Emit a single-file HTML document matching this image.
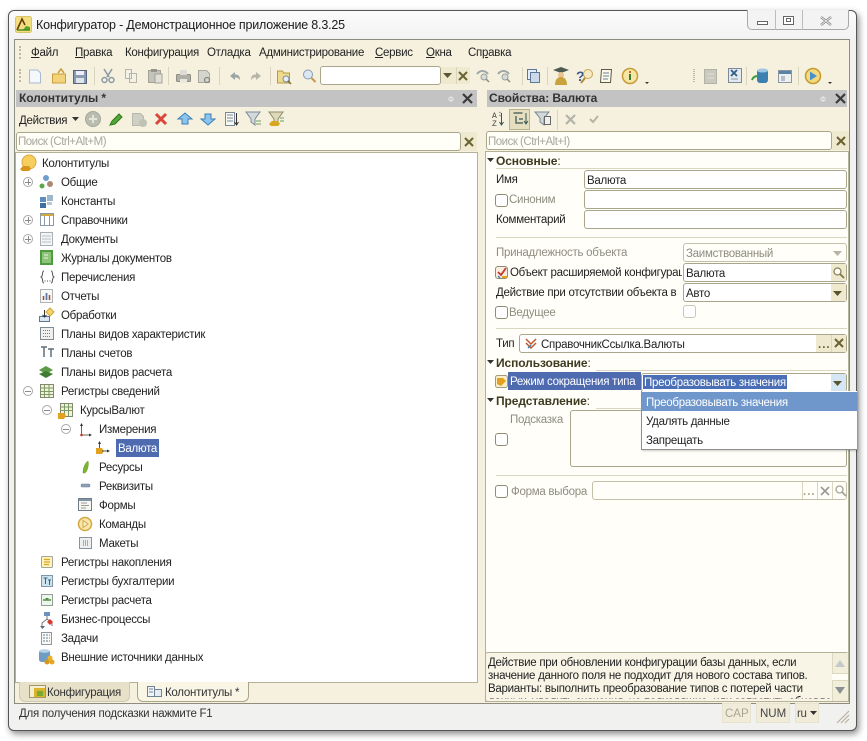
<!DOCTYPE html>
<html><head><meta charset="utf-8">
<style>
html,body{margin:0;padding:0;background:#fff}
body{width:867px;height:741px;position:relative;overflow:hidden;font:11.5px/16px "Liberation Sans",sans-serif;letter-spacing:-.27px;color:#222}
div,span,svg{position:absolute;box-sizing:border-box}
.t{white-space:nowrap;height:16px;line-height:16px;margin-top:1px}
.g{color:#8f8d80}
.b{font-weight:bold;color:#3d3a20;font-size:12px;letter-spacing:-.1px;margin-top:0}
.f{background:#fff;border:1px solid #a9a68c;border-radius:3px}
.d{background:#fffef8;border:1px solid #c4c1ab;border-radius:3px}
.hr{height:1px;background:#d9d6c2}
.cb{width:13px;height:13px;background:#fff;border:1px solid #8f8d78;border-radius:3px}
.btn{background:#efe9cf}
.hd{background:#c3c3c3;height:17px;top:90px}
.tb{background:#f5f1de}
</style></head><body>
<!-- window -->
<div style="left:8px;top:10px;width:849px;height:721px;background:#f1f1ef;border:1px solid #555;border-radius:6px;box-shadow:2px 3px 7px rgba(0,0,0,.45)"></div>
<div style="left:9px;top:11px;width:847px;height:29px;background:linear-gradient(#fbfbfb,#f2f2f2);border-radius:6px 6px 0 0"></div>
<!-- app icon -->
<svg style="left:15px;top:16px" width="17" height="17" viewBox="0 0 17 17"><rect width="16" height="16" x=".5" y=".5" rx="2" fill="#f3de7e" stroke="#d8c466"/><path d="M2 14 7 3l3 6" fill="none" stroke="#6a3b12" stroke-width="1.6"/><path d="M8 14l3-4 4 1v3z" fill="#5aa02c"/><path d="M2 14h13" stroke="#3f8a1e" stroke-width="1.4"/></svg>
<div class="t" style="left:36px;top:17px;margin-top:0;font-size:12.5px;letter-spacing:-.2px;color:#1c1c1c">Конфигуратор - Демонстрационное приложение 8.3.25</div>
<!-- window buttons -->
<div style="left:747px;top:10px;width:102px;height:20px;background:#f3f3f3;border:1px solid #a8a8a8;border-top:0;border-radius:0 0 5px 5px"></div>
<div style="left:775px;top:10px;width:1px;height:20px;background:#bdbdbd"></div>
<div style="left:802px;top:10px;width:1px;height:20px;background:#bdbdbd"></div>
<div style="left:757px;top:21px;width:11px;height:4px;border:1px solid #666;background:#fff"></div>
<div style="left:783px;top:16px;width:11px;height:9px;border:1px solid #666;background:#fff"></div>
<div style="left:786px;top:18px;width:5px;height:4px;border:1px solid #666"></div>
<svg style="left:820px;top:16px" width="12" height="10" viewBox="0 0 12 10"><path d="M1 1l10 8M11 1 1 9" stroke="#777" stroke-width="2.4"/><path d="M1 1l10 8M11 1 1 9" stroke="#eee" stroke-width="1"/></svg>
<!-- client area -->
<div style="left:14px;top:39px;width:836px;height:665px;background:#f5f1de;border:1px solid #8e8c7e"></div>
<!-- menu -->
<div style="left:19px;top:46px;width:2px;height:13px;border-left:2px dotted #bdb9a3"></div>
<div class="t" style="left:31px;top:44px;text-decoration:none"><u>Ф</u>айл</div>
<div class="t" style="left:75px;top:44px"><u>П</u>равка</div>
<div class="t" style="left:125px;top:44px">Конфигурация</div>
<div class="t" style="left:207px;top:44px">Отладка</div>
<div class="t" style="left:259px;top:44px">Администрирование</div>
<div class="t" style="left:375px;top:44px"><u>С</u>ервис</div>
<div class="t" style="left:426px;top:44px"><u>О</u>кна</div>
<div class="t" style="left:468px;top:44px">Сп<u>р</u>авка</div>
<!-- toolbar -->
<div style="left:19px;top:69px;width:2px;height:13px;border-left:2px dotted #bdb9a3"></div>
<svg style="left:0;top:60px" width="867" height="30" viewBox="0 60 867 30">
<g stroke="#d8d4bd"><path d="M94.500 67v18M168.500 67v18M219.500 67v18M270.500 67v18M522.500 67v18M547.500 67v18M746.500 67v18M798.500 67v18"/></g>
<path d="M29.500 70h8l3 3v10h-11z" fill="#f4f7fb" stroke="#a9bad0"/>
<path d="M52.500 74h13v9h-13z" fill="#f3d37a" stroke="#c99f3e"/><path d="M58 73l3-4 3 4" fill="none" stroke="#c99f3e" stroke-width="1.500"/>
<rect x="73.500" y="70.500" width="13" height="13" fill="#8a9bb0" stroke="#56657a"/><rect x="76" y="71" width="8" height="4" fill="#eef"/><rect x="76" y="78" width="8" height="5" fill="#dfe5ec"/>
<path d="M104 69l5 8M112 69l-5 8" stroke="#8d99a6" stroke-width="1.600"/><circle cx="104.500" cy="80" r="2.500" fill="none" stroke="#8d99a6" stroke-width="1.500"/><circle cx="111.500" cy="80" r="2.500" fill="none" stroke="#8d99a6" stroke-width="1.500"/>
<path d="M125.500 69.500h6v9h-6zM129.500 73.500h7v9h-7z" fill="#f3f1e7" stroke="#b5b4a6"/>
<rect x="148.500" y="70.500" width="12" height="12" fill="#c4c4bc" stroke="#a3a297"/><rect x="151" y="69" width="6" height="3" fill="#96958a"/><rect x="155" y="74" width="7" height="9" fill="#e0e0d8" stroke="#a3a297"/>
<rect x="176.500" y="74.500" width="14" height="7" rx="1" fill="#b0afa6" stroke="#8f8e85"/><rect x="180" y="70" width="7" height="5" fill="#dcdcd4"/><rect x="180" y="79" width="7" height="4" fill="#e8e8e0"/>
<path d="M198.500 70.500h8l3 3v9h-11z" fill="#d5d5cd" stroke="#a8a89e"/><circle cx="207" cy="80" r="2.500" fill="none" stroke="#888" stroke-width="1.300"/>
<path d="M230 76l5-4v2.500c4 0 5 2 5 6-1-2-2-3-5-3V80z" fill="#9ba5a3"/><path d="M261 76l-5-4v2.500c-4 0-5 2-5 6 1-2 2-3 5-3V80z" fill="#b4b4a8"/>
<path d="M277.500 71h5l1 2h6v10h-12z" fill="#f0d98b" stroke="#b59b49"/><circle cx="286" cy="79" r="3" fill="#e7eef5" stroke="#7a8c9e"/><path d="M288 81l3 3" stroke="#7a6a3a" stroke-width="1.500"/>
<circle cx="308" cy="74.500" r="4.500" fill="#dbe7f3" stroke="#8b9cb0"/><path d="M311.500 78l4 4" stroke="#c39a50" stroke-width="2"/>
<path d="M477 74c3-4 8-4 11 0M498 74c3-4 8-4 11 0" fill="none" stroke="#9ea8a8" stroke-width="2"/><circle cx="484" cy="77" r="3" fill="#d8dcd8" stroke="#97a09e"/><path d="M486 79l3 3" stroke="#8b8b80" stroke-width="1.500"/><circle cx="505" cy="77" r="3" fill="#d8dcd8" stroke="#97a09e"/><path d="M507 79l3 3" stroke="#8b8b80" stroke-width="1.500"/>
<rect x="527.500" y="69.500" width="9" height="10" fill="#e5edf6" stroke="#5c7896"/><rect x="530.500" y="72.500" width="9" height="10" fill="#cbd9e9" stroke="#5c7896"/>
<path d="M553 70l8-3 8 3-8 3z" fill="#4d5a52"/><circle cx="561" cy="75" r="3" fill="#eac38f"/><path d="M555 85c0-6 3-8 6-8s6 2 6 8z" fill="#c9a23d"/>
<text x="576" y="81" font-family="Liberation Sans" font-size="14" font-weight="bold" fill="#3d5c8d">?</text><circle cx="588" cy="74" r="4.500" fill="#f5e9c2" stroke="#c3a65b"/><path d="M585 78l-4 5" stroke="#b08a3a" stroke-width="2"/>
<path d="M601.500 69.500h10l-1 13h-10z" fill="#fdf9e9" stroke="#585b4c"/><path d="M603 73h6M603 76h6M603 79h5" stroke="#6c8098"/>
<circle cx="630" cy="76" r="7.500" fill="#f6e6a6" stroke="#c79b35" stroke-width="1.500"/><rect x="629" y="74" width="2" height="6" fill="#3f7a2e"/><rect x="629" y="71" width="2" height="2" fill="#c56a1d"/>
<path d="M645 82h4l-2 2z" fill="#333"/>
<path d="M694 69v13" stroke="#bdb9a3" stroke-width="2" stroke-dasharray="1 1"/>
<rect x="704.500" y="69.500" width="12" height="14" fill="#c9c9c0" stroke="#b2b2a6"/><path d="M707 74h7M707 78h7" stroke="#e0e0d8"/>
<rect x="728.500" y="68.500" width="13" height="14" fill="#e4e9ee" stroke="#7a8a9a"/><path d="M731 70l6 6M737 70l-6 6" stroke="#2e5d86" stroke-width="1.800"/><path d="M731 79h7" stroke="#89a"/>
<rect x="757" y="69" width="11" height="14" rx="3" fill="#3c7fb1"/><ellipse cx="762.500" cy="70.500" rx="5.500" ry="2" fill="#9fc7e3"/><path d="M752 80c1-3 3-4 6-4" fill="none" stroke="#3e9a3e" stroke-width="2"/>
<rect x="778.500" y="70.500" width="13" height="12" fill="#eef0f0" stroke="#8b97a2"/><rect x="779" y="71" width="12" height="3" fill="#5b83a8"/><rect x="781" y="76" width="4" height="5" fill="#b5bfc8"/>
<circle cx="813" cy="76" r="7.500" fill="#f4d97f" stroke="#c4992f" stroke-width="1.500"/><path d="M810 71.500l7 4.500-7 4.500z" fill="#4b91c9"/>
<path d="M828 82h4l-2 2z" fill="#333"/>
</svg>
<div class="f" style="left:320px;top:66px;width:121px;height:19px"></div>
<div class="btn" style="left:441px;top:67px;width:15px;height:17px"></div>
<svg style="left:442px;top:73px" width="12" height="6"><path d="M1 0h9L5.500 5z" fill="#5a5431"/></svg>
<div class="btn" style="left:456px;top:67px;width:14px;height:17px;border-left:1px solid #d9d4ba"></div>
<svg style="left:458px;top:71px" width="10" height="10"><path d="M1 1l8 8M9 1 1 9" stroke="#6b6232" stroke-width="2"/></svg>

<!-- left panel -->
<div class="hd" style="left:16px;width:461px"></div>
<div class="t b" style="left:19px;top:90px;color:#333">Колонтитулы *</div>
<div class="t" style="left:448px;top:91px;font-size:8px;color:#eee">Ф</div>
<svg style="left:461px;top:92px" width="13" height="13"><path d="M2 2l9 9M11 2 2 11" stroke="#3a3a3a" stroke-width="2.200"/></svg>
<div class="t" style="left:19px;top:112px">Действия</div>
<svg style="left:72px;top:117px" width="7" height="5"><path d="M0 0h7L3.500 4z" fill="#333"/></svg>
<svg style="left:0;top:105px" width="300" height="28" viewBox="0 105 300 28">
<circle cx="93" cy="119" r="7.500" fill="#b9bcae" stroke="#a4a79a"/><path d="M89 119h8M93 115v8" stroke="#e4e4da" stroke-width="2"/>
<path d="M110 125l2-4 7-7 3 3-7 7z" fill="#53a635" stroke="#2f7a1c"/>
<path d="M132.500 113.500h8l3 3v9h-11z" fill="#cfcfc5" stroke="#b8b8ac"/><circle cx="143" cy="123" r="4" fill="#bfc3b5"/>
<path d="M156 114l10 10M166 114l-10 10" stroke="#d9473a" stroke-width="3"/>
<path d="M178 119l7-6 7 6h-4v5h-6v-5z" fill="#8cc4ee" stroke="#3c7fb8"/>
<path d="M201 119l7 6 7-6h-4v-5h-6v5z" fill="#8cc4ee" stroke="#3c7fb8"/>
<path d="M225.500 112.500h9v13h-9z" fill="#f8f8f4" stroke="#7a8794"/><path d="M227 115h6M227 118h6M227 121h6" stroke="#7a8794"/><path d="M236.500 113v12M234.500 122l2 3 2-3" fill="none" stroke="#333"/>
<path d="M246 112h14l-5 7v6l-4-3v-3z" fill="#d3d8da" stroke="#7c8a94"/><path d="M256 121h5M256 124h5" stroke="#6f9e6a"/>
<path d="M269 112h14l-5 7v3h-4v-3z" fill="#dfd9b9" stroke="#8b8a6a"/><path d="M269 124l3-3h6l2 3-2 2h-7z" fill="#d8a61f"/><path d="M280 118h4M280 121h4" stroke="#6f9e6a"/>
</svg>
<div class="f" style="left:16px;top:132px;width:445px;height:19px;background:#fffef7"></div>
<div class="t" style="left:18px;top:133px;color:#a8a79f;letter-spacing:-.5px">Поиск (Ctrl+Alt+M)</div>
<div class="btn" style="left:461px;top:132px;width:16px;height:19px"></div>
<svg style="left:464px;top:137px" width="10" height="10"><path d="M1 1l8 8M9 1 1 9" stroke="#6b6232" stroke-width="2"/></svg>
<!-- tree -->
<div style="left:15px;top:152px;width:463px;height:531px;background:#fff;border:1px solid #b4b199"></div>
<div class="t" style="left:42px;top:155px">Колонтитулы</div>
<div class="t" style="left:61px;top:174px">Общие</div>
<div class="t" style="left:61px;top:193px">Константы</div>
<div class="t" style="left:61px;top:212px">Справочники</div>
<div class="t" style="left:61px;top:231px">Документы</div>
<div class="t" style="left:61px;top:250px">Журналы документов</div>
<div class="t" style="left:61px;top:269px">Перечисления</div>
<div class="t" style="left:61px;top:288px">Отчеты</div>
<div class="t" style="left:61px;top:307px">Обработки</div>
<div class="t" style="left:61px;top:326px">Планы видов характеристик</div>
<div class="t" style="left:61px;top:345px">Планы счетов</div>
<div class="t" style="left:61px;top:364px">Планы видов расчета</div>
<div class="t" style="left:61px;top:383px">Регистры сведений</div>
<div class="t" style="left:80px;top:402px">КурсыВалют</div>
<div class="t" style="left:99px;top:421px">Измерения</div>
<div style="left:116px;top:439px;width:43px;height:18px;background:#4e6bb0"></div>
<div class="t" style="left:118px;top:440px;color:#fff">Валюта</div>
<div class="t" style="left:99px;top:459px">Ресурсы</div>
<div class="t" style="left:99px;top:478px">Реквизиты</div>
<div class="t" style="left:99px;top:497px">Формы</div>
<div class="t" style="left:99px;top:516px">Команды</div>
<div class="t" style="left:99px;top:535px">Макеты</div>
<div class="t" style="left:61px;top:554px">Регистры накопления</div>
<div class="t" style="left:61px;top:573px">Регистры бухгалтерии</div>
<div class="t" style="left:61px;top:592px">Регистры расчета</div>
<div class="t" style="left:61px;top:611px">Бизнес-процессы</div>
<div class="t" style="left:61px;top:630px">Задачи</div>
<div class="t" style="left:61px;top:649px">Внешние источники данных</div>
<svg style="left:0;top:150px" width="170" height="530" viewBox="0 150 170 530">
<!-- root -->
<circle cx="29" cy="162" r="7" fill="#f5cf5e" stroke="#d9a93a"/><path d="M20 169l3-3h6l2 3-2 2h-7z" fill="#d8931a"/>
<!-- plus/minus -->
<g fill="#fff" stroke="#a9a9a9"><circle cx="28" cy="182" r="4.500"/><circle cx="28" cy="220" r="4.500"/><circle cx="28" cy="239" r="4.500"/><circle cx="28" cy="391" r="4.500"/><circle cx="47" cy="410" r="4.500"/><circle cx="66" cy="429" r="4.500"/></g>
<path d="M25 182.500h6M28.500 179v6M25 220.500h6M28.500 217v6M25 239.500h6M28.500 236v6M25 391.500h6M44 410.500h6M63 429.500h6" stroke="#8a8a8a"/>
<!-- общие -->
<circle cx="46" cy="178" r="3" fill="#6d9ecf"/><circle cx="42" cy="186" r="2.500" fill="#59a84a"/><circle cx="50" cy="184" r="3" fill="#a98a72"/>
<!-- константы -->
<rect x="40" y="197" width="6" height="5" fill="#5c8ebd"/><rect x="40" y="203" width="6" height="5" fill="#3f719f"/><rect x="47" y="195" width="6" height="6" fill="#9db7cc"/><rect x="47" y="202" width="5" height="3" fill="#b9c7d2"/>
<!-- справочники -->
<rect x="40.500" y="213.500" width="13" height="12" fill="#fff" stroke="#8b9aa6"/><path d="M44.500 214v11M49.500 214v11" stroke="#8b9aa6"/><rect x="41" y="214" width="12" height="2" fill="#d2a93e"/>
<!-- документы -->
<rect x="40.500" y="232.500" width="12" height="13" fill="#f3f4f3" stroke="#a8b0b4"/><path d="M42 236h9M42 239h9M42 242h9" stroke="#b8c0c4"/>
<!-- журналы -->
<rect x="40" y="250" width="13" height="15" fill="#4e9b40"/><rect x="42" y="252" width="9" height="11" fill="#8dc47a"/><path d="M44 255h4M44 258h4" stroke="#f0f5e6"/>
<!-- перечисления -->
<path d="M44 271c-2 0-1 3-2 5-.5 1-1.500 1-1.500 1s1 0 1.500 1c1 2 0 5 2 5M51 271c2 0 1 3 2 5 .5 1 1.500 1 1.500 1s-1 0-1.500 1c-1 2 0 5-2 5" fill="none" stroke="#555"/><path d="M44.500 281h1M47 281h1M49.500 281h1" stroke="#444"/>
<!-- отчеты -->
<rect x="40.500" y="289.500" width="12" height="13" fill="#f8f8f4" stroke="#b0b2b4"/><path d="M43.500 300v-4M46.500 300v-7M49.500 300v-5" stroke="#a04a3a" stroke-width="1.500"/><path d="M46.500 300v-7" stroke="#5c7da8" stroke-width="1.500"/>
<!-- обработки -->
<path d="M50 308l4 4-4 4-4-4z" fill="#f3d36a" stroke="#d0a63a"/><rect x="39.500" y="316.500" width="10" height="5" fill="#dbe6f0" stroke="#5a7894"/><path d="M44.500 310v7M42.500 315l2 2 2-2" fill="none" stroke="#333"/>
<!-- ПВХ -->
<rect x="40.500" y="327.500" width="13" height="12" fill="#f0f0f0" stroke="#7f8a92"/><path d="M43 330.500h8M43 333.500h8M43 336.500h8" stroke="#5c7da8" stroke-dasharray="1 1"/>
<!-- планы счетов -->
<path d="M41 347h6M44 347v10M48 349h6M51 349v8" stroke="#5e6f7c" stroke-width="1.500" fill="none"/>
<!-- планы видов расчета -->
<path d="M39 370l7-4 7 4-7 4z" fill="#5f9a48"/><path d="M39 374l7-3 7 3-7 4z" fill="#3e7d30"/>
<!-- регистры сведений -->
<rect x="40.500" y="384.500" width="13" height="13" fill="#f4f1d6" stroke="#7d8a6e"/><path d="M41 388h12M41 391.500h12M41 394.500h12M44.500 385v12M49 385v12" stroke="#7a9a6a"/>
<!-- КурсыВалют -->
<rect x="60.500" y="403.500" width="12" height="13" fill="#f4f1d6" stroke="#7d8a6e"/><path d="M61 407h11M61 410.500h11M64.500 404v12M68.500 404v12" stroke="#7a9a6a"/><path d="M58 413h6l2 3-2 3h-6z" fill="#e2a21f"/>
<!-- измерения -->
<path d="M81.500 424v11h9" fill="none" stroke="#666"/><path d="M81.500 423l-1.500 3h3zM92 435l-3-1.500v3z" fill="#333"/><circle cx="81.500" cy="435" r="1.300" fill="#c0392b"/>
<!-- валюта (dimension) -->
<path d="M96 448h6l2 3-2 3h-6z" fill="#e2a21f"/><path d="M99.500 443v5M102 451h7" stroke="#555"/><path d="M99.500 441l-1.500 3h3zM110 451l-3-1.500v3z" fill="#333"/>
<!-- ресурсы -->
<path d="M83 473c0-5 2-10 5-12 1 4-.5 10-3 12z" fill="#7cb52e" stroke="#5d9420" stroke-width=".5"/>
<!-- реквизиты -->
<rect x="81" y="484" width="9" height="3" rx="1" fill="#8aa0b8" stroke="#6c7f94" stroke-width=".5"/>
<!-- формы -->
<rect x="78.500" y="498.500" width="13" height="12" fill="#f7f7f2" stroke="#6f7d88"/><rect x="79" y="499" width="12" height="2" fill="#7f93a6"/><path d="M81 503h6M81 505.500h8M81 508h5" stroke="#999"/>
<!-- команды -->
<circle cx="85" cy="524" r="6.500" fill="#f7e6ad" stroke="#d4a83d" stroke-width="1.500"/><path d="M83 520.500l5 3.500-5 3.500z" fill="#f8f2d8" stroke="#d4a83d"/>
<!-- макеты -->
<rect x="79.500" y="537.500" width="12" height="11" fill="#eef0f0" stroke="#8a949c"/><path d="M83 541h5M83 543h5M83 545h5" stroke="#666" stroke-dasharray="1 1"/>
<!-- регистры накопления -->
<rect x="41.500" y="556.500" width="11" height="11" rx="1" fill="#fdf2bf" stroke="#a5a794"/><path d="M44 559.500h6M44 562h6M44 564.500h5" stroke="#dba722" stroke-width="1.300"/>
<!-- бухгалтерии -->
<rect x="41.500" y="575.500" width="11" height="11" fill="#cfe3ef" stroke="#7f97a8"/><path d="M43.500 578h4M45.500 578v6M48 580h3M49.500 580v5" stroke="#36617f"/>
<!-- расчета -->
<rect x="41.500" y="594.500" width="11" height="11" fill="#eef4ee" stroke="#8fa18f"/><path d="M43 600h8" stroke="#4e8f3a" stroke-width="1.500"/><path d="M45 598l2 2 2-2z" fill="#4e8f3a"/>
<!-- бизнес-процессы -->
<rect x="44" y="612" width="6" height="4" fill="#6b91bd"/><path d="M47 616v3M42 623v3M52 623v3M42 623l5-4 5 4" fill="none" stroke="#777"/><path d="M50 619l3 3-3 3-3-3z" fill="#d8392a"/><path d="M40 626h5l-2.500 3z" fill="#586c80"/>
<!-- задачи -->
<rect x="41.500" y="632.500" width="10" height="12" fill="#f8f8f4" stroke="#8d99a2"/><path d="M43 635h7M43 638h7M43 641h7" stroke="#6c7f94" stroke-dasharray="2 1"/>
<!-- внешние источники -->
<rect x="39" y="650" width="11" height="12" rx="2.500" fill="#6f9cc4"/><ellipse cx="44.500" cy="651" rx="5.500" ry="1.800" fill="#b8d1e5"/><circle cx="50" cy="658" r="2.500" fill="#eab12a"/><circle cx="47" cy="662" r="2.500" fill="#d9951c"/><circle cx="52" cy="662" r="2.500" fill="#e6a621"/>
</svg>
<!-- tabs -->
<div style="left:19px;top:682px;width:111px;height:20px;background:#e7e1ca;border:1px solid #cfcab0;border-top:0;border-radius:0 0 6px 6px"></div>
<div style="left:137px;top:682px;width:112px;height:20px;background:#f9f6e6;border:1px solid #a8a58a;border-top:0;border-radius:0 0 6px 6px"></div>
<svg style="left:29px;top:684px" width="18" height="15"><rect x=".5" y="1.500" width="16" height="12" fill="#f5efcf" stroke="#a3976a"/><rect x="5" y="4" width="11" height="9" fill="#d8b52c"/><rect x="8" y="7" width="6" height="5" fill="#7aa832"/></svg>
<svg style="left:147px;top:685px" width="16" height="13"><path d="M.5 1.500h7v10h-7z" fill="#f1f5f8" stroke="#6f8394"/><path d="M7.500 4.500h7v7h-7z" fill="#e5edf3" stroke="#6f8394"/><path d="M2 4h4M2 7h4" stroke="#6f8394"/></svg>
<div class="t" style="left:47px;top:684px;color:#333">Конфигурация</div>
<div class="t" style="left:165px;top:684px;color:#333">Колонтитулы *</div>

<!-- right panel -->
<div class="hd" style="left:487px;width:360px"></div>
<div class="t b" style="left:489px;top:90px;color:#333">Свойства: Валюта</div>
<div class="t" style="left:820px;top:91px;font-size:8px;color:#eee">Ф</div>
<svg style="left:834px;top:92px" width="13" height="13"><path d="M2 2l9 9M11 2 2 11" stroke="#3a3a3a" stroke-width="2.200"/></svg>
<div style="left:509px;top:109px;width:21px;height:21px;background:#e6dfbf;border:1px solid #b8b291"></div>
<svg style="left:485px;top:105px" width="130" height="26" viewBox="485 105 130 26">
<text x="492" y="118" font-family="Liberation Mono" font-size="8" fill="#444">A</text><text x="492" y="126" font-family="Liberation Mono" font-size="8" fill="#444">Z</text><path d="M501.500 113v12M499.500 122l2 3 2-3" fill="none" stroke="#355" /><path d="M499 112l2 1M499 115l2 1" stroke="#999"/>
<path d="M513.500 113h9M516 116v7h7M519 119h4" fill="none" stroke="#556a66" stroke-width="1.500"/><path d="M526 113v11M524 121l2 3 2-3" fill="none" stroke="#355"/>
<path d="M535 112h14l-5 6v7l-4-3v-4z" fill="#d3d8da" stroke="#7c8a94"/><rect x="544.500" y="116.500" width="6" height="8" fill="#eee" stroke="#666"/>
<path d="M566 115l9 9M575 115l-9 9" stroke="#b3b3a8" stroke-width="2.200"/>
<path d="M590 119l3 3 5-6" fill="none" stroke="#b3b3a8" stroke-width="2"/>
<path d="M557.500 110v20" stroke="#d9d4ba"/>
</svg>
<div class="f" style="left:486px;top:131px;width:346px;height:19px;background:#fffef7"></div>
<div class="t" style="left:488px;top:133px;color:#a8a79f;letter-spacing:-.5px">Поиск (Ctrl+Alt+I)</div>
<div class="btn" style="left:832px;top:131px;width:17px;height:19px"></div>
<svg style="left:836px;top:136px" width="10" height="10"><path d="M1 1l8 8M9 1 1 9" stroke="#6b6232" stroke-width="2"/></svg>
<div style="left:485px;top:151px;width:364px;height:551px;background:#fffef8;border:1px solid #b4b199"></div>

<svg style="left:487px;top:158px" width="8" height="6"><path d="M0 0h7L3.500 4z" fill="#333"/></svg>
<div class="t b" style="left:496px;top:153px">Основные<span style="position:static;font-weight:normal">:</span></div>
<div class="hr" style="left:496px;top:168px;width:351px"></div>
<div class="t" style="left:496px;top:171px">Имя</div>
<div class="f" style="left:584px;top:170px;width:263px;height:19px"></div>
<div class="t" style="left:587px;top:172px">Валюта</div>
<div class="cb" style="left:495px;top:194px"></div>
<div class="t g" style="left:509px;top:191px">Синоним</div>
<div class="f" style="left:584px;top:190px;width:263px;height:19px"></div>
<div class="t" style="left:496px;top:211px">Комментарий</div>
<div class="f" style="left:584px;top:210px;width:263px;height:19px"></div>
<div class="hr" style="left:496px;top:237px;width:351px"></div>
<div class="t g" style="left:496px;top:244px">Принадлежность объекта</div>
<div class="d" style="left:683px;top:243px;width:164px;height:19px"></div>
<div class="t g" style="left:686px;top:245px">Заимствованный</div>
<svg style="left:833px;top:251px" width="10" height="6"><path d="M0 0h9L4.500 5z" fill="#b5b3a5"/></svg>
<div class="cb" style="left:495px;top:266px;background:#fbeee0"></div>
<svg style="left:495px;top:266px" width="13" height="13"><path d="M3 6l3 3 5-7" fill="none" stroke="#c0392b" stroke-width="1.800"/><path d="M7 10h5v2H7z" fill="#e2a21f"/><path d="M3 10l2 2" stroke="#3e7fb8" stroke-width="1.500"/></svg>
<div style="left:510px;top:264px;width:172px;height:17px;overflow:hidden"><div class="t" style="left:0;top:0">Объект расширяемой конфигурации</div></div>
<div class="f" style="left:683px;top:263px;width:164px;height:19px"></div>
<div class="t" style="left:686px;top:265px">Валюта</div>
<div class="btn" style="left:831px;top:264px;width:15px;height:17px"></div>
<svg style="left:832px;top:266px" width="13" height="13"><circle cx="5.500" cy="5.500" r="3.500" fill="#fff" stroke="#8a8455" stroke-width="1.300"/><path d="M8 8l4 4" stroke="#7c7443" stroke-width="1.800"/></svg>
<div class="t" style="left:496px;top:284px">Действие при отсутствии объекта в</div>
<div class="f" style="left:683px;top:283px;width:164px;height:19px"></div>
<div class="t" style="left:686px;top:285px">Авто</div>
<div class="btn" style="left:831px;top:284px;width:15px;height:17px"></div>
<svg style="left:833px;top:291px" width="10" height="6"><path d="M0 0h9L4.500 5z" fill="#5a5431"/></svg>
<div class="cb" style="left:495px;top:306px"></div>
<div class="t g" style="left:509px;top:304px">Ведущее</div>
<div class="cb" style="left:683px;top:305px;border-color:#c9c7b8"></div>
<div class="hr" style="left:496px;top:328px;width:351px"></div>
<div class="t" style="left:496px;top:335px">Тип</div>
<div class="f" style="left:519px;top:334px;width:328px;height:19px"></div>
<svg style="left:525px;top:337px" width="13" height="13"><path d="M1 2l5 5 5-5M1 6l5 5 5-5" fill="none" stroke="#c0552b" stroke-width="1.500"/><path d="M3 11l3-3" stroke="#3e7fb8" stroke-width="1.500"/></svg>
<div class="t" style="left:541px;top:336px">СправочникСсылка.Валюты</div>
<div class="btn" style="left:816px;top:335px;width:30px;height:17px"></div>
<div style="left:831px;top:335px;width:1px;height:17px;background:#d9d4ba"></div>
<div class="t" style="left:818px;top:336px;color:#6b6232;font-weight:bold;letter-spacing:1px">...</div>
<svg style="left:834px;top:338px" width="10" height="10"><path d="M1 1l8 8M9 1 1 9" stroke="#6b6232" stroke-width="2"/></svg>
<svg style="left:487px;top:360px" width="8" height="6"><path d="M0 0h7L3.500 4z" fill="#333"/></svg>
<div class="t b" style="left:496px;top:355px">Использование<span style="position:static;font-weight:normal">:</span></div>
<div class="hr" style="left:596px;top:370px;width:251px"></div>
<svg style="left:495px;top:375px" width="13" height="13"><rect x=".5" y=".5" width="12" height="12" rx="2" fill="#f8eecb" stroke="#a49a78"/><path d="M2 3h6l3 3-3 3-2 2-4-2z" fill="#e2a21f"/></svg>
<div style="left:508px;top:372px;width:133px;height:18px;background:#4e6bb0"></div>
<div class="t" style="left:510px;top:373px;color:#fff">Режим сокращения типа</div>
<div class="f" style="left:641px;top:373px;width:206px;height:19px"></div>
<div style="left:643px;top:375px;width:144px;height:14px;background:#4a6fb6"></div>
<div class="t" style="left:644px;top:374px;color:#fff">Преобразовывать значения</div>
<div style="left:831px;top:374px;width:15px;height:17px;background:#d5e7f4"></div>
<svg style="left:833px;top:381px" width="10" height="6"><path d="M0 0h9L4.500 5z" fill="#5a5431"/></svg>
<svg style="left:487px;top:398px" width="8" height="6"><path d="M0 0h7L3.500 4z" fill="#333"/></svg>
<div class="t b" style="left:496px;top:393px">Представление<span style="position:static;font-weight:normal">:</span></div>
<div class="hr" style="left:596px;top:408px;width:251px"></div>
<div class="t g" style="left:510px;top:411px">Подсказка</div>
<div class="cb" style="left:495px;top:433px"></div>
<div class="f" style="left:570px;top:410px;width:277px;height:57px;background:#fffef8"></div>
<div class="hr" style="left:496px;top:475px;width:351px"></div>
<div class="cb" style="left:495px;top:485px"></div>
<div class="t g" style="left:511px;top:483px">Форма выбора</div>
<div class="d" style="left:592px;top:481px;width:255px;height:19px"></div>
<div class="t" style="left:803px;top:483px;color:#a9a68c;font-weight:bold;letter-spacing:1px">...</div>
<div class="hr" style="left:802px;top:482px;width:1px;height:17px"></div>
<div class="hr" style="left:817px;top:482px;width:1px;height:17px"></div>
<div class="hr" style="left:832px;top:482px;width:1px;height:17px"></div>
<svg style="left:820px;top:486px" width="10" height="10"><path d="M1 1l8 8M9 1 1 9" stroke="#9b9b92" stroke-width="1.600"/></svg>
<svg style="left:834px;top:484px" width="13" height="13"><circle cx="5.500" cy="5.500" r="3.500" fill="none" stroke="#a3a396" stroke-width="1.300"/><path d="M8 8l4 4" stroke="#a3a396" stroke-width="1.800"/></svg>
<!-- popup -->
<div style="left:641px;top:391px;width:216px;height:59px;background:#fff;border:1px solid #8f8f8f;border-width:0 0 1px 1px;box-shadow:1px 1px 2px rgba(0,0,0,.2)"></div>
<div style="left:642px;top:392px;width:215px;height:19px;background:#6f97cb"></div>
<div class="t" style="left:646px;top:394px;color:#fff">Преобразовывать значения</div>
<div class="t" style="left:646px;top:413px">Удалять данные</div>
<div class="t" style="left:646px;top:432px">Запрещать</div>
<!-- description -->
<div style="left:485px;top:652px;width:364px;height:50px;background:#f8f5e6;border:1px solid #b4b199;border-radius:3px"></div>
<div style="left:486px;top:653px;width:346px;height:46px;overflow:hidden">
<div class="t" style="left:2px;top:1px">Действие при обновлении конфигурации базы данных, если</div>
<div class="t" style="left:2px;top:14px">значение данного поля не подходит для нового состава типов.</div>
<div class="t" style="left:2px;top:27px">Варианты: выполнить преобразование типов с потерей части</div>
<div class="t" style="left:2px;top:40px">данных, удалить значения, не подходящие, или запретить обновление</div>
</div>
<div style="left:832px;top:653px;width:16px;height:48px;background:#f1eeda;border-left:1px solid #dcd8c2"></div>
<div style="left:832px;top:673px;width:16px;height:8px;background:#fffef6;border:1px solid #dcd8c2;border-width:1px 0"></div>
<svg style="left:835px;top:660px" width="10" height="8"><path d="M5 0l5 7H0z" fill="#c5c9c9"/></svg>
<svg style="left:835px;top:687px" width="10" height="8"><path d="M0 0h10L5 7z" fill="#8a8f92"/></svg>
<!-- status -->
<div class="t" style="left:19px;top:705px;color:#333">Для получения подсказки нажмите F1</div>
<div style="left:722px;top:703px;width:29px;height:20px;background:#f0ecd9;border:1px solid #e7e3cd"></div>
<div class="t" style="left:725px;top:705px;color:#a7a692;letter-spacing:0">CAP</div>
<div style="left:756px;top:703px;width:34px;height:20px;background:#f0ecd9;border:1px solid #e7e3cd"></div>
<div class="t" style="left:760px;top:705px;color:#444;letter-spacing:0">NUM</div>
<div style="left:795px;top:703px;width:24px;height:20px;background:#f0ecd9;border:1px solid #e7e3cd"></div>
<div class="t" style="left:797px;top:705px;color:#444">ru</div>
<svg style="left:810px;top:711px" width="7" height="5"><path d="M0 0h7L3.500 4z" fill="#333"/></svg>
<svg style="left:835px;top:708px" width="15" height="16"><path d="M14 3 2 15M14 7 6 15M14 11l-4 4" stroke="#b5b2a0" stroke-width="1.200"/></svg>
</body></html>
